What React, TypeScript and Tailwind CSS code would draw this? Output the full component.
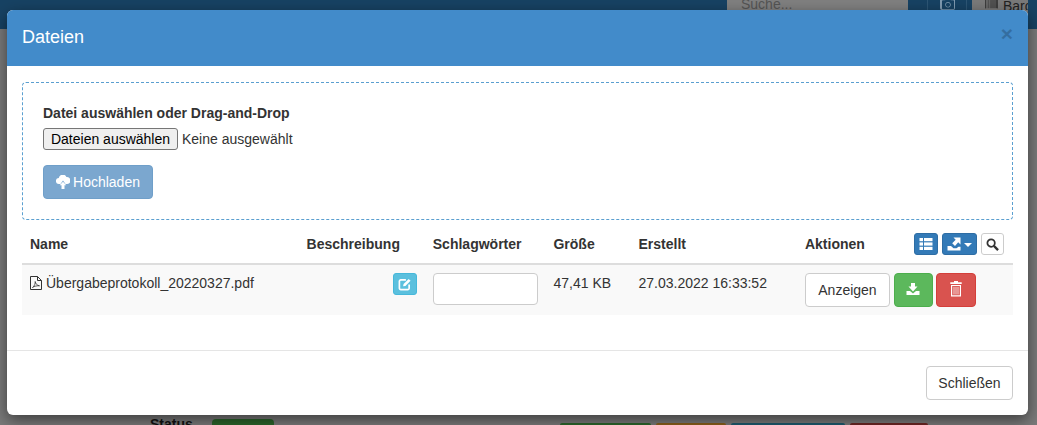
import { FaBarcode, FaCamera } from 'react-icons/fa';

const headers = [
  { label: 'Name', width: 'w-[276.6px]' },
  { label: 'Beschreibung', width: 'w-[126.200px]' },
  { label: 'Schlagwörter', width: 'w-[120.700px]' },
  { label: 'Größe', width: 'w-[85px]' },
  { label: 'Erstellt', width: 'w-[166.500px]' },
];

function ListIcon() {
  return (
    <svg viewBox="0 0 14 14" className="h-[14px] w-[14px]" fill="currentColor">
      <rect x="0.5" y="1" width="3.5" height="3.200" />
      <rect x="5" y="1" width="8.500" height="3.200" />
      <rect x="0.5" y="5.400" width="3.5" height="3.200" />
      <rect x="5" y="5.400" width="8.500" height="3.200" />
      <rect x="0.5" y="9.800" width="3.5" height="3.200" />
      <rect x="5" y="9.800" width="8.500" height="3.200" />
    </svg>
  );
}

function ExportIcon() {
  return (
    <svg viewBox="0 0 14 14" className="h-[14px] w-[14px]" fill="currentColor">
      <path d="M6.500 0.5h7v7l-2.300-2.300L8 9 5.200 6.200l3.500-3.500z" />
      <path d="M0.5 9h3.500l2.500 2.300h3l2-1.500h2v3.700H0.500z" />
    </svg>
  );
}

function SearchIcon() {
  return (
    <svg viewBox="0 0 14 14" className="h-[13px] w-[13px]" fill="none" stroke="currentColor">
      <circle cx="5.500" cy="5.500" r="4" strokeWidth="1.900" />
      <path d="M8.500 8.500 13 13" strokeWidth="2.500" />
    </svg>
  );
}

function UploadIcon() {
  return (
    <svg viewBox="0 0 14 14" className="h-[14px] w-[14px]" fill="currentColor">
      <path d="M3 9a3 3 0 0 1 -.2-6a4 4 0 0 1 7.600-1a3.300 3.300 0 0 1 .8 7h-1.700L7 5.500 4.500 9z" />
      <path d="M7 6.800 10.300 10.200H8.500V14H5.500V10.200H3.700z" />
    </svg>
  );
}

function PdfIcon() {
  return (
    <svg viewBox="0 0 12 14" className="mt-[3px] h-[14px] w-[12px] shrink-0" fill="none" stroke="currentColor">
      <path d="M.5.500h7l4 4v9h-11z" />
      <path d="M7.500.500v4h4" />
      <path d="M2.500 11.500c2-1.200 3-4.500 2.700-6c0 2 2 4 4.300 4.300c-2.300-.2-5.200.3-7 1.700z" strokeWidth="0.800" />
    </svg>
  );
}

function EditIcon() {
  return (
    <svg viewBox="0 0 14 14" className="h-[13px] w-[13px]" fill="none" stroke="currentColor">
      <path d="M8.500 2H3A1.500 1.500 0 0 0 1.500 3.500v7.500A1.500 1.500 0 0 0 3 12.500h7.500A1.500 1.500 0 0 0 12 11V7" strokeWidth="1.800" />
      <path d="M5.500 9l.5-2.500L11.500 1l2 2L8 8.500z" fill="currentColor" stroke="none" />
    </svg>
  );
}

function SaveIcon() {
  return (
    <svg viewBox="0 0 14 14" className="h-[14px] w-[14px]" fill="currentColor">
      <path d="M5 0h4v3.500h2.500L7 8.500 2.500 3.500H5z" />
      <path d="M.5 8h3.500l3 2.500 3-2.500h3.500v4H.500z" />
    </svg>
  );
}

function TrashIcon() {
  return (
    <svg viewBox="0 0 12 16" className="mb-[3px] h-[16px] w-[12px]" fill="currentColor">
      <path d="M4 0h4v1.200h3.700V3H.300V1.200H4z" />
      <path fillRule="evenodd" d="M1 4h10v11.500H1zM2.200 5v9.300h7.600V5z" />
      <rect x="3.500" y="5.800" width="1" height="7.700" opacity="0.8" />
      <rect x="5.500" y="5.800" width="1" height="7.700" opacity="0.8" />
      <rect x="7.500" y="5.800" width="1" height="7.700" opacity="0.8" />
    </svg>
  );
}

export default function App() {
  return (
    <div className="relative h-[425px] w-[1037px] overflow-hidden bg-[#7a7a7a] font-['Liberation_Sans',sans-serif] text-[14px] text-[#333]">
      {/* page behind the backdrop */}
      <div className="flex h-[29px] items-start bg-[#174263]">
        <div className="ml-[727px] h-[10px] w-[181px] overflow-hidden bg-[#808080] pl-[14px] text-[14px] leading-[8px] text-[#555]">
          Suche...
        </div>
        <div className="ml-[19px] h-[10px] w-[40px] border-x border-[#2d5675] pl-[12px]">
          <div className="flex h-[10px] w-[15px] items-end justify-center overflow-hidden rounded-b-[2px] bg-[#7f9ab0] text-[#174263]">
            <FaCamera className="h-[12px] w-[12px]" />
          </div>
        </div>
        <div className="ml-[5px] h-[21px] w-[56px] bg-[#7a7a7a]">
          <div className="flex h-[10px] items-end gap-[5px] overflow-hidden pl-[13px] leading-[8px] whitespace-nowrap text-[#222]">
            <FaBarcode className="h-[13px] w-[13px] shrink-0" />
            Barcode
          </div>
        </div>
      </div>
      <div className="absolute top-[417px] left-[150px] leading-[14px] font-bold text-[#111]">Status</div>
      <div className="absolute top-[419px] left-[212px] h-[10px] w-[62px] rounded-t-[4px] bg-[#2c662c]" />
      <div className="absolute top-[423px] left-[560px] flex h-[2px] gap-[5px]">
        <div className="w-[91px] rounded-t-[4px] bg-[#2c662c]" />
        <div className="w-[70px] rounded-t-[4px] bg-[#8a5f1b]" />
        <div className="w-[114px] rounded-t-[4px] bg-[#1d5a6e]" />
        <div className="w-[78px] rounded-t-[4px] bg-[#6e2724]" />
      </div>

      {/* modal */}
      <div className="absolute top-[10px] left-[7px] flex h-[405px] w-[1021px] flex-col overflow-hidden rounded-[6px] bg-white shadow-[0_5px_15px_rgba(0,0,0,0.5)]">
        <div className="flex h-[56px] items-start justify-between bg-[#428bca] px-[15px] pt-[15px] text-white">
          <h4 className="text-[18px] leading-[25px] font-normal">Dateien</h4>
          <span className="text-[21px] leading-[18px] font-bold text-black opacity-20">×</span>
        </div>

        <div className="flex-1 px-[15px] pt-[16px]">
          <div className="h-[138px] rounded-[4px] border border-dashed border-[#5a9fd0] px-[20px] pt-[20px]">
            <label className="block leading-[20px] font-bold">Datei auswählen oder Drag-and-Drop</label>
            <div className="mt-[5px] flex h-[22px] items-center">
              <span className="flex h-[22px] w-[135px] items-center justify-center rounded-[3px] border border-[#767676] bg-[#efefef] text-black">
                Dateien auswählen
              </span>
              <span className="ml-[4px]">Keine ausgewählt</span>
            </div>
            <button className="mt-[15px] flex h-[34px] w-[110px] items-center justify-center gap-[3px] rounded-[4px] border border-[#6f9fc9] bg-[#7ba7cf] text-white">
              <UploadIcon />
              Hochladen
            </button>
          </div>

          <div className="mt-[5px] flex h-[40px] items-center border-b-2 border-[#ddd] font-bold">
            {headers.map((h) => (
              <div key={h.label} className={`${h.width} pl-[8px]`}>
                {h.label}
              </div>
            ))}
            <div className="flex flex-1 items-center pr-[9px] pl-[8px]">
              <span>Aktionen</span>
              <div className="ml-auto flex gap-[4px]">
                <button className="flex h-[22px] w-[24px] items-center justify-center rounded-[3px] border border-[#2e6da4] bg-[#337ab7] text-white">
                  <ListIcon />
                </button>
                <button className="flex h-[22px] w-[35px] items-center justify-center gap-[3px] rounded-[3px] border border-[#2e6da4] bg-[#337ab7] text-white">
                  <ExportIcon />
                  <span className="mt-[2px] h-0 w-0 border-x-[4px] border-t-[4px] border-x-transparent border-t-white" />
                </button>
                <button className="flex h-[22px] w-[23px] items-center justify-center rounded-[3px] border border-[#ccc] bg-white text-[#333]">
                  <SearchIcon />
                </button>
              </div>
            </div>
          </div>

          <div className="flex h-[50px] bg-[#f9f9f9]">
            <div className="flex w-[276.6px] items-start gap-[4px] pt-[8px] pl-[8px] leading-[20px]">
              <PdfIcon />
              <span>Übergabeprotokoll_20220327.pdf</span>
            </div>
            <div className="flex w-[126.200px] justify-end pt-[8px] pr-[8px]">
              <button className="flex h-[22px] w-[24px] items-center justify-center rounded-[3px] border border-[#46b8da] bg-[#5bc0de] text-white">
                <EditIcon />
              </button>
            </div>
            <div className="w-[120.700px] pt-[8px] pl-[8px]">
              <div className="h-[32px] w-[105px] rounded-[4px] border border-[#ccc] bg-white" />
            </div>
            <div className="w-[85px] pt-[8px] pl-[8px] leading-[20px]">47,41 KB</div>
            <div className="w-[166.500px] pt-[8px] pl-[8px] leading-[20px]">27.03.2022 16:33:52</div>
            <div className="flex flex-1 items-start pt-[8px] pl-[8px]">
              <button className="h-[34px] w-[85px] rounded-[4px] border border-[#ccc] bg-white">Anzeigen</button>
              <button className="ml-[4px] flex h-[34px] w-[39px] items-center justify-center rounded-[4px] border border-[#4cae4c] bg-[#5cb85c] text-white">
                <SaveIcon />
              </button>
              <button className="ml-[3px] flex h-[34px] w-[40px] items-center justify-center rounded-[4px] border border-[#d43f3a] bg-[#d9534f] text-white">
                <TrashIcon />
              </button>
            </div>
          </div>
        </div>

        <div className="flex h-[65px] items-start justify-end border-t border-[#e5e5e5] px-[15px] pt-[15px]">
          <button className="h-[34px] w-[87px] rounded-[4px] border border-[#ccc] bg-white">Schließen</button>
        </div>
      </div>
    </div>
  );
}
